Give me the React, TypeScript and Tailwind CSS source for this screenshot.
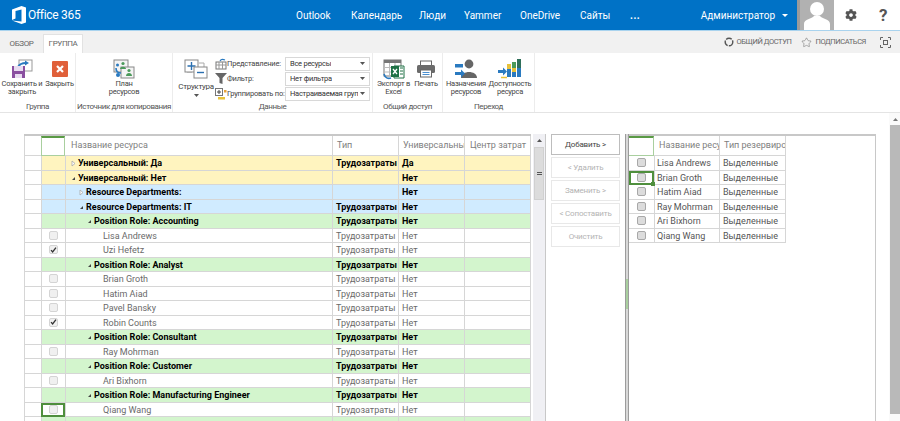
import { FaCog } from "react-icons/fa";
import { Star } from "lucide-react";

const font = { fontFamily: 'Roboto, "Open Sans", sans-serif' };

type Row = {
  name: string;
  type?: string;
  uni?: string;
  kind: "yellow" | "blue" | "green" | "item";
  level?: number;
  open?: boolean;
  checked?: boolean;
  selected?: boolean;
};

const rows: Row[] = [
  { name: "Универсальный: Да", type: "Трудозатраты", uni: "Да", kind: "yellow", level: 0, open: false },
  { name: "Универсальный: Нет", uni: "Нет", kind: "yellow", level: 0, open: true },
  { name: "Resource Departments:", uni: "Нет", kind: "blue", level: 1, open: false },
  { name: "Resource Departments: IT", type: "Трудозатраты", uni: "Нет", kind: "blue", level: 1, open: true },
  { name: "Position Role: Accounting", type: "Трудозатраты", uni: "Нет", kind: "green", level: 2, open: true },
  { name: "Lisa Andrews", type: "Трудозатраты", uni: "Нет", kind: "item" },
  { name: "Uzi Hefetz", type: "Трудозатраты", uni: "Нет", kind: "item", checked: true },
  { name: "Position Role: Analyst", type: "Трудозатраты", uni: "Нет", kind: "green", level: 2, open: true },
  { name: "Brian Groth", type: "Трудозатраты", uni: "Нет", kind: "item" },
  { name: "Hatim Aiad", type: "Трудозатраты", uni: "Нет", kind: "item" },
  { name: "Pavel Bansky", type: "Трудозатраты", uni: "Нет", kind: "item" },
  { name: "Robin Counts", type: "Трудозатраты", uni: "Нет", kind: "item", checked: true },
  { name: "Position Role: Consultant", type: "Трудозатраты", uni: "Нет", kind: "green", level: 2, open: true },
  { name: "Ray Mohrman", type: "Трудозатраты", uni: "Нет", kind: "item" },
  { name: "Position Role: Customer", type: "Трудозатраты", uni: "Нет", kind: "green", level: 2, open: true },
  { name: "Ari Bixhorn", type: "Трудозатраты", uni: "Нет", kind: "item" },
  { name: "Position Role: Manufacturing Engineer", type: "Трудозатраты", uni: "Нет", kind: "green", level: 2, open: true },
  { name: "Qiang Wang", type: "Трудозатраты", uni: "Нет", kind: "item", selected: true },
  { name: "", kind: "green", level: 2 },
];

const assigned = ["Lisa Andrews", "Brian Groth", "Hatim Aiad", "Ray Mohrman", "Ari Bixhorn", "Qiang Wang"];

const rowBg = {
  yellow: "bg-[#fff4bf]",
  blue: "bg-[#d0ebff]",
  green: "bg-[#d3f5cd]",
  item: "bg-white",
};

function Check({ checked, dark }: { checked?: boolean; dark?: boolean }) {
  return (
    <div
      className={`flex h-[9px] w-[9px] items-center justify-center rounded-[2px] border ${
        dark ? "border-[#a8a8a8] bg-[#dcdcdc]" : "border-[#d4d4d4] bg-[#f0f0f0]"
      }`}
    >
      {checked && (
        <svg width="8" height="8" viewBox="0 0 8 8">
          <path d="M1.2 4.2 3 6.2 6.8 1.2" fill="none" stroke="#333" strokeWidth="1.5" />
        </svg>
      )}
    </div>
  );
}

function Tri({ open }: { open?: boolean }) {
  return open ? (
    <svg width="5" height="5" viewBox="0 0 5 5" className="shrink-0">
      <path d="M1 4 4 4 4 1Z" fill="#444" />
    </svg>
  ) : (
    <svg width="5" height="7" viewBox="0 0 5 7" className="shrink-0">
      <path d="M1 1 4 3.5 1 6Z" fill="#fff" stroke="#aaa" strokeWidth="0.8" />
    </svg>
  );
}

function GridRow({ row }: { row: Row }) {
  const group = row.kind !== "item";
  const text = group ? "font-bold text-black" : "text-[#6a6a6a]";
  return (
    <div className="flex h-[14.5px] text-[9px] leading-[15px]">
      <div className="w-[16px] shrink-0 border-b border-[#d6d6d6] bg-white" />
      <div
        className={`flex w-[24px] shrink-0 items-center justify-center ${rowBg[row.kind]} ${
          row.selected ? "border-2 border-[#4f8f3d]" : "border-b border-l border-[#d6d6d6]"
        }`}
      >
        {!group && <Check checked={row.checked} />}
      </div>
      <div className={`w-[267px] shrink-0 border-b border-l border-[#d6d6d6] ${rowBg[row.kind]} ${text}`}>
        {group ? (
          <div
            className={`flex items-center gap-[2px] ${
              row.level === 0 ? "pl-[5px]" : row.level === 1 ? "pl-[13px]" : "pl-[21px]"
            }`}
          >
            {row.name && <Tri open={row.open} />}
            <span>{row.name}</span>
          </div>
        ) : (
          <span className="pl-[37px]">{row.name}</span>
        )}
      </div>
      <div className={`w-[66px] shrink-0 truncate border-b border-l border-[#d6d6d6] pl-[3px] ${rowBg[row.kind]} ${text}`}>
        {row.type}
      </div>
      <div className={`w-[66px] shrink-0 border-b border-l border-[#d6d6d6] pl-[3px] ${rowBg[row.kind]} ${text}`}>
        {row.uni}
      </div>
      <div className={`w-[67px] shrink-0 border-b border-l border-r border-[#d6d6d6] ${rowBg[row.kind]}`} />
    </div>
  );
}

function RibbonLabel({ children }: { children: React.ReactNode }) {
  return <div className="whitespace-nowrap text-center text-[8px] leading-[10px] tracking-[-0.4px] text-[#555]">{children}</div>;
}

function LargeButton({ icon, lines, width }: { icon: React.ReactNode; lines: string[]; width: string }) {
  return (
    <div className={`flex flex-col items-center ${width}`}>
      <div className="flex h-[22px] items-center justify-center">{icon}</div>
      <div className="text-center text-[7.5px] leading-[8px] tracking-[-0.25px] text-[#444]">
        {lines.map((l) => (
          <div key={l} className="whitespace-nowrap">
            {l}
          </div>
        ))}
      </div>
    </div>
  );
}

function SaveIcon() {
  return (
    <svg width="22" height="20" viewBox="0 0 22 20">
      <rect x="8" y="1" width="13" height="11" fill="#fff" stroke="#999" />
      <path d="M7 8 C9 4 12 4 15 4" fill="none" stroke="#2a7ac0" strokeWidth="2" />
      <path d="M14 1.5 18 4 14 6.5Z" fill="#2a7ac0" />
      <rect x="1" y="7" width="13" height="12" fill="#8a4fa0" />
      <rect x="3" y="7" width="9" height="5" fill="#e8dcf0" />
      <rect x="4" y="15" width="7" height="4" fill="#e8dcf0" />
    </svg>
  );
}

function CloseIcon() {
  return (
    <svg width="16" height="16" viewBox="0 0 16 16">
      <rect width="16" height="16" rx="1" fill="#e0603a" />
      <path d="M5 5 11 11M11 5 5 11" stroke="#fff" strokeWidth="2.2" />
    </svg>
  );
}

function PlanIcon() {
  return (
    <svg width="22" height="20" viewBox="0 0 22 20">
      <rect x="1" y="1" width="14" height="12" fill="#f4f4f4" stroke="#888" />
      <rect x="8" y="8" width="13" height="11" fill="#f4f4f4" stroke="#888" />
      <circle cx="10" cy="4.5" r="1.6" fill="#4b9a5a" />
      <path d="M7 10 C7 7 13 7 13 10Z" fill="#4b9a5a" />
      <circle cx="4.5" cy="6" r="1.5" fill="#2a7ac0" />
      <circle cx="16" cy="11.5" r="1.6" fill="#4b9a5a" />
      <path d="M13 17 C13 13 19 13 19 17Z" fill="#4b9a5a" />
      <path d="M3 9 C3 12 5 14 8 14" fill="none" stroke="#2a7ac0" strokeWidth="1.6" />
      <circle cx="5" cy="16" r="2" fill="#2a7ac0" />
    </svg>
  );
}

function StructIcon() {
  return (
    <svg width="24" height="20" viewBox="0 0 24 20">
      <path d="M3 13H8M15 4H20V8" fill="none" stroke="#aaa" />
      <rect x="1" y="1" width="13" height="12" fill="#fff" stroke="#888" />
      <path d="M3.5 7H11.5M7.5 3V11" stroke="#2a6fb0" strokeWidth="1.4" />
      <rect x="10" y="8" width="13" height="11" fill="#fff" stroke="#888" />
      <path d="M13 13.5H20" stroke="#2a6fb0" strokeWidth="1.4" />
    </svg>
  );
}

function ExcelIcon() {
  return (
    <svg width="22" height="21" viewBox="0 0 22 21">
      <rect x="1" y="1" width="17" height="16" fill="#fff" stroke="#777" />
      <rect x="1" y="1" width="17" height="3" fill="#777" />
      <path d="M6.5 4V17M12 4V17M1 8.5H18M1 13H18" stroke="#bbb" />
      <path d="M11 7H21V19H11Z" fill="#fff" stroke="#1e7145" />
      <rect x="8" y="7" width="8" height="11" fill="#1e7145" />
      <path d="M10 10 14 15M14 10 10 15" stroke="#fff" strokeWidth="1.3" />
      <path d="M17 9H20M17 12H20M17 15H20" stroke="#1e7145" />
      <path d="M1 15 C2 19 5 20 8 19" fill="none" stroke="#2a7ac0" strokeWidth="1.6" />
    </svg>
  );
}

function PrintIcon() {
  return (
    <svg width="20" height="18" viewBox="0 0 20 18">
      <rect x="4.5" y="1" width="11" height="5" fill="#fff" stroke="#666" />
      <rect x="1" y="5" width="18" height="8" rx="1.5" fill="#6b6b6b" />
      <rect x="4.5" y="10" width="11" height="7" fill="#fff" stroke="#666" />
      <path d="M6.5 12.5H13.5" stroke="#4a8fd0" />
      <path d="M6.5 14.5H13.5" stroke="#4a8fd0" />
    </svg>
  );
}

function AssignIcon() {
  return (
    <svg width="24" height="20" viewBox="0 0 24 20">
      <circle cx="15" cy="5" r="4.4" fill="#666" />
      <path d="M7 19 C7 11 23 11 23 19Z" fill="#666" />
      <rect x="1" y="5" width="8" height="3.5" fill="#2a7ac0" />
      <path d="M1 13H7V10.5L11 14.5 7 18.5V16H1Z" fill="#2a7ac0" />
    </svg>
  );
}

function AvailIcon() {
  return (
    <svg width="24" height="21" viewBox="0 0 24 21">
      <rect x="9" y="5" width="4" height="5" fill="#e8c23a" />
      <rect x="9" y="10" width="4" height="8" fill="#2a7ac0" />
      <rect x="14" y="3" width="4" height="6" fill="#4b9a5a" />
      <rect x="14" y="9" width="4" height="4" fill="#e8c23a" />
      <rect x="14" y="13" width="4" height="5" fill="#2a7ac0" />
      <rect x="19" y="0" width="4" height="9" fill="#2f6f5a" />
      <rect x="19" y="9" width="4" height="9" fill="#2a7ac0" />
      <path d="M0 11H5V8.5L9 12.5 5 16.5V14H0Z" fill="#2a7ac0" />
      <path d="M3 18.5H9" stroke="#e8c23a" strokeWidth="1.5" />
    </svg>
  );
}

function SmallCaret() {
  return (
    <svg width="5" height="3" viewBox="0 0 5 3" className="shrink-0">
      <path d="M0 0H5L2.5 3Z" fill="#555" />
    </svg>
  );
}

function SelectBox({ text }: { text: string }) {
  return (
    <div className="flex h-[14px] w-[85px] items-center justify-between gap-[2px] border border-[#d8d8d8] bg-white px-[4px] text-[7.5px] tracking-[-0.25px] text-[#333]">
      <span className="overflow-hidden whitespace-nowrap">{text}</span>
      <SmallCaret />
    </div>
  );
}

function OptionRow({ icon, label, text }: { icon: React.ReactNode; label: string; text: string }) {
  return (
    <div className="flex h-[15px] items-center">
      <div className="flex w-[13px] justify-center">{icon}</div>
      <div className="w-[58px] whitespace-nowrap text-[7.5px] tracking-[-0.2px] text-[#444]">{label}</div>
      <SelectBox text={text} />
    </div>
  );
}

function SideButton({ label, active }: { label: string; active?: boolean }) {
  return (
    <div
      className={`flex h-[21px] items-center justify-center border text-[8px] tracking-[-0.2px] ${
        active ? "border-[#bdbdbd] text-[#444]" : "border-[#e8e8e8] text-[#b4b4b4]"
      }`}
    >
      {label}
    </div>
  );
}

export default function App() {
  return (
    <div className="flex h-[421px] w-[900px] flex-col overflow-hidden bg-white" style={font}>
      {/* suite bar */}
      <div className="flex h-[30px] shrink-0">
        <div className="flex w-[797px] items-center bg-[#0072c6] text-white">
          <svg width="15" height="18" viewBox="0 0 15 18" className="ml-[12px]">
            <path d="M0 3.5 9.5 0 14 1.5V16.5L9.5 18 0 14.5 9.5 15.5V3.5L3.5 5V12.5L0 14Z" fill="#fff" />
          </svg>
          <span className="ml-[1px] w-[50px] whitespace-nowrap text-[12px] tracking-[-0.3px]">Office 365</span>
          <div className="ml-[218px] flex items-center text-[10px]">
            <span className="w-[55px]">Outlook</span>
            <span className="w-[68px]">Календарь</span>
            <span className="w-[45px]">Люди</span>
            <span className="w-[56px]">Yammer</span>
            <span className="w-[60px]">OneDrive</span>
            <span className="w-[50px]">Сайты</span>
            <span className="font-bold tracking-[0.5px]">...</span>
          </div>
          <span className="ml-auto text-[10px]">Администратор</span>
          <svg width="6" height="3" viewBox="0 0 6 3" className="ml-[7px] mr-[9px]">
            <path d="M0 0H6L3 3Z" fill="#fff" />
          </svg>
        </div>
        <div className="w-[3px] bg-[#9a9a9a]" />
        <div className="w-[34px] bg-[#b1b1b1]">
          <svg width="34" height="30" viewBox="0 0 34 30">
            <circle cx="17" cy="9" r="7" fill="#fff" />
            <path d="M4 30V24C4 19 12 19 14 16H20C22 19 30 19 30 24V30Z" fill="#fff" />
          </svg>
        </div>
        <div className="flex flex-1 items-center bg-white text-[#555]">
          <FaCog size={12} className="ml-[11px]" />
          <span className="ml-[22px] text-[17px] font-bold leading-none">?</span>
        </div>
      </div>

      {/* tabs */}
      <div className="flex h-[23px] shrink-0 items-end border-t border-[#a9d3ee] bg-[#f1f1f1] text-[8px] tracking-[-0.4px] text-[#666]">
        <div className="flex h-[19px] w-[43px] items-center justify-center">ОБЗОР</div>
        <div className="flex h-[19px] w-[40px] items-center justify-center border-t border-l border-r border-[#e2e2e2] bg-white">
          ГРУППА
        </div>
        <div className="ml-auto flex h-[22px] items-center text-[7.5px]">
          <svg width="10" height="10" viewBox="0 0 10 10" className="mr-[3px]">
            <circle cx="5" cy="5" r="3.8" fill="none" stroke="#555" strokeWidth="1.4" strokeDasharray="6 1.2" />
          </svg>
          <span>ОБЩИЙ ДОСТУП</span>
          <Star size={11} strokeWidth={1} className="ml-[10px] mr-[3px] text-[#555]" />
          <span>ПОДПИСАТЬСЯ</span>
          <svg width="11" height="11" viewBox="0 0 11 11" className="ml-[14px] mr-[9px]">
            <rect x="3.5" y="3.5" width="4" height="4" fill="none" stroke="#666" />
            <path d="M0.5 3V0.5H3M8 0.5H10.5V3M10.5 8V10.5H8M3 10.5H0.5V8" fill="none" stroke="#666" />
          </svg>
        </div>
      </div>

      {/* ribbon */}
      <div className="flex h-[60px] shrink-0 border-b border-[#e4e4e4] bg-white">
        <div className="flex w-[76px] flex-col justify-between border-r border-[#ececec] pt-[5px]">
          <div className="flex">
            <LargeButton icon={<SaveIcon />} lines={["Сохранить и", "закрыть"]} width="w-[44px]" />
            <LargeButton icon={<CloseIcon />} lines={["Закрыть"]} width="w-[31px]" />
          </div>
          <RibbonLabel>Группа</RibbonLabel>
        </div>
        <div className="flex w-[97px] flex-col justify-between border-r border-[#ececec] pt-[5px]">
          <LargeButton icon={<PlanIcon />} lines={["План", "ресурсов"]} width="w-full" />
          <RibbonLabel>Источник для копирования</RibbonLabel>
        </div>
        <div className="flex w-[200px] flex-col justify-between border-r border-[#ececec] pt-[3px]">
          <div className="flex">
            <div className="flex w-[41px] flex-col items-center pl-[5px] pt-[3px]">
              <StructIcon />
              <div className="mt-[3px] text-[8px] leading-[9px] tracking-[-0.3px] text-[#444]">Структура</div>
              <div className="mt-[3px]">
                <SmallCaret />
              </div>
            </div>
            <div className="flex flex-col">
              <OptionRow
                label="Представление:"
                text="Все ресурсы"
                icon={
                  <svg width="12" height="12" viewBox="0 0 12 12">
                    <rect x="1" y="4" width="10" height="7" fill="#fff" stroke="#777" />
                    <path d="M1 7H11M4 4V11M7.5 4V11" stroke="#999" />
                    <path d="M5 3C6 1 8 1 10 2" fill="none" stroke="#2a7ac0" strokeWidth="1.2" />
                  </svg>
                }
              />
              <OptionRow
                label="Фильтр:"
                text="Нет фильтра"
                icon={
                  <svg width="12" height="11" viewBox="0 0 12 11">
                    <path d="M0 0H12L7.5 5V11L4.5 10V5Z" fill="#666" />
                  </svg>
                }
              />
              <OptionRow
                label="Группировать по:"
                text="Настраиваемая групп."
                icon={
                  <svg width="12" height="12" viewBox="0 0 12 12">
                    <rect x="0.5" y="0.5" width="7" height="7" fill="#fff" stroke="#777" />
                    <path d="M2 4H6M4 2V6" stroke="#444" />
                    <rect x="9" y="2" width="2.5" height="2.5" fill="#e8a33a" />
                    <rect x="3" y="9" width="7" height="2.5" fill="#e8c23a" />
                  </svg>
                }
              />
            </div>
          </div>
          <RibbonLabel>Данные</RibbonLabel>
        </div>
        <div className="flex w-[70px] flex-col justify-between border-r border-[#ececec] pt-[5px]">
          <div className="flex pl-[1px]">
            <LargeButton icon={<ExcelIcon />} lines={["Экспорт в", "Excel"]} width="w-[39px]" />
            <LargeButton icon={<PrintIcon />} lines={["Печать"]} width="w-[26px]" />
          </div>
          <RibbonLabel>Общий доступ</RibbonLabel>
        </div>
        <div className="flex w-[92px] flex-col justify-between border-r border-[#ececec] pt-[5px]">
          <div className="flex">
            <LargeButton icon={<AssignIcon />} lines={["Назначения", "ресурсов"]} width="w-[46px]" />
            <LargeButton icon={<AvailIcon />} lines={["Доступность", "ресурса"]} width="w-[42px]" />
          </div>
          <RibbonLabel>Переход</RibbonLabel>
        </div>
      </div>

      {/* body */}
      <div className="flex min-h-0 flex-1">
        <div className="flex min-w-0 flex-1 pl-[24px] pt-[21px]">
          {/* left grid */}
          <div className="w-[507px] shrink-0 border-t-2 border-[#c8c8c8]">
            <div className="flex h-[20px] text-[9px] text-[#808080]">
              <div className="w-[17px] shrink-0 border-b border-l border-[#d6d6d6]" />
              <div className="w-[24px] shrink-0 border-t-2 border-b border-l border-r border-[#a9cf9f] border-t-[#5a9a45]" />
              <div className="flex w-[267px] shrink-0 items-center border-b border-[#d6d6d6] pl-[6px]">Название ресурса</div>
              <div className="flex w-[66px] shrink-0 items-center border-b border-l border-[#d6d6d6] pl-[4px]">Тип</div>
              <div className="flex w-[66px] shrink-0 items-center overflow-hidden whitespace-nowrap border-b border-l border-[#d6d6d6] pl-[4px]">
                Универсальный
              </div>
              <div className="flex w-[67px] shrink-0 items-center whitespace-nowrap border-b border-l border-r border-[#d6d6d6] pl-[5px]">
                Центр затрат
              </div>
            </div>
            <div className="border-l border-[#d6d6d6]">
              {rows.map((r, i) => (
                <GridRow key={i} row={r} />
              ))}
            </div>
          </div>

          {/* left scrollbar */}
          <div className="ml-[2px] flex w-[13px] shrink-0 flex-col border-r border-[#c8c8c8] bg-[#f0f0f4] px-[1px]">
            <div className="flex h-[13px] items-center justify-center">
              <svg width="5" height="3" viewBox="0 0 5 3">
                <path d="M0 3H5L2.5 0Z" fill="#555" />
              </svg>
            </div>
            <div className="flex h-[53px] items-center justify-center border border-[#d0d0d0] bg-[#dcdcdc]">
              <div className="h-[3px] w-[5px] border-y border-[#555]" />
            </div>
          </div>

          {/* add / remove buttons */}
          <div className="ml-[5px] flex w-[69px] shrink-0 flex-col gap-[2px]">
            <SideButton label="Добавить >" active />
            <SideButton label="< Удалить" />
            <SideButton label="Заменить >" />
            <SideButton label="< Сопоставить" />
            <SideButton label="Очистить" />
          </div>

          {/* splitter */}
          <div className="ml-[5px] flex w-[4px] shrink-0 flex-col border-x border-[#9c9c9c] bg-[#d8d8d8]">
            <div className="mt-[145px] h-[30px] border border-[#a9cf9f] bg-white" />
          </div>

          {/* right grid */}
          <div className="w-[247px] shrink-0 border-r border-t-2 border-[#c8c8c8]">
            <div className="flex h-[20px] text-[9px] text-[#808080]">
              <div className="w-[25px] shrink-0 border-t-2 border-b border-r border-[#a9cf9f] border-t-[#5a9a45]" />
              <div className="flex w-[65px] shrink-0 items-center overflow-hidden whitespace-nowrap border-b border-[#d6d6d6] pl-[5px]">
                Название ресурса
              </div>
              <div className="flex w-[67px] shrink-0 items-center overflow-hidden whitespace-nowrap border-b border-l border-r border-[#d6d6d6] pl-[4px]">
                Тип резервирования
              </div>
            </div>
            {assigned.map((name, i) => (
              <div key={name} className="flex h-[14.5px] text-[9px] leading-[15px] text-[#555]">
                <div
                  className={`relative flex w-[25px] shrink-0 items-center justify-center ${
                    i === 1 ? "border-2 border-[#4f8f3d]" : "border-b border-[#d6d6d6]"
                  }`}
                >
                  <Check dark />
                  {i === 1 && <div className="absolute bottom-[-3px] right-[-3px] h-[4px] w-[4px] bg-[#4f8f3d]" />}
                </div>
                <div className="w-[65px] shrink-0 truncate border-b border-l border-[#d6d6d6] pl-[2px]">{name}</div>
                <div className="w-[67px] shrink-0 truncate border-b border-l border-r border-[#d6d6d6] pl-[3px]">Выделенные</div>
              </div>
            ))}
          </div>
        </div>

        {/* page scrollbar */}
        <div className="flex w-[11px] shrink-0 flex-col bg-[#fafafa] pl-[1px]">
          <div className="flex h-[12px] items-center justify-center">
            <svg width="5" height="3" viewBox="0 0 5 3">
              <path d="M0 3H5L2.5 0Z" fill="#777" />
            </svg>
          </div>
          <div className="h-[289px] bg-[#b9b9b9]" />
        </div>
      </div>
    </div>
  );
}
